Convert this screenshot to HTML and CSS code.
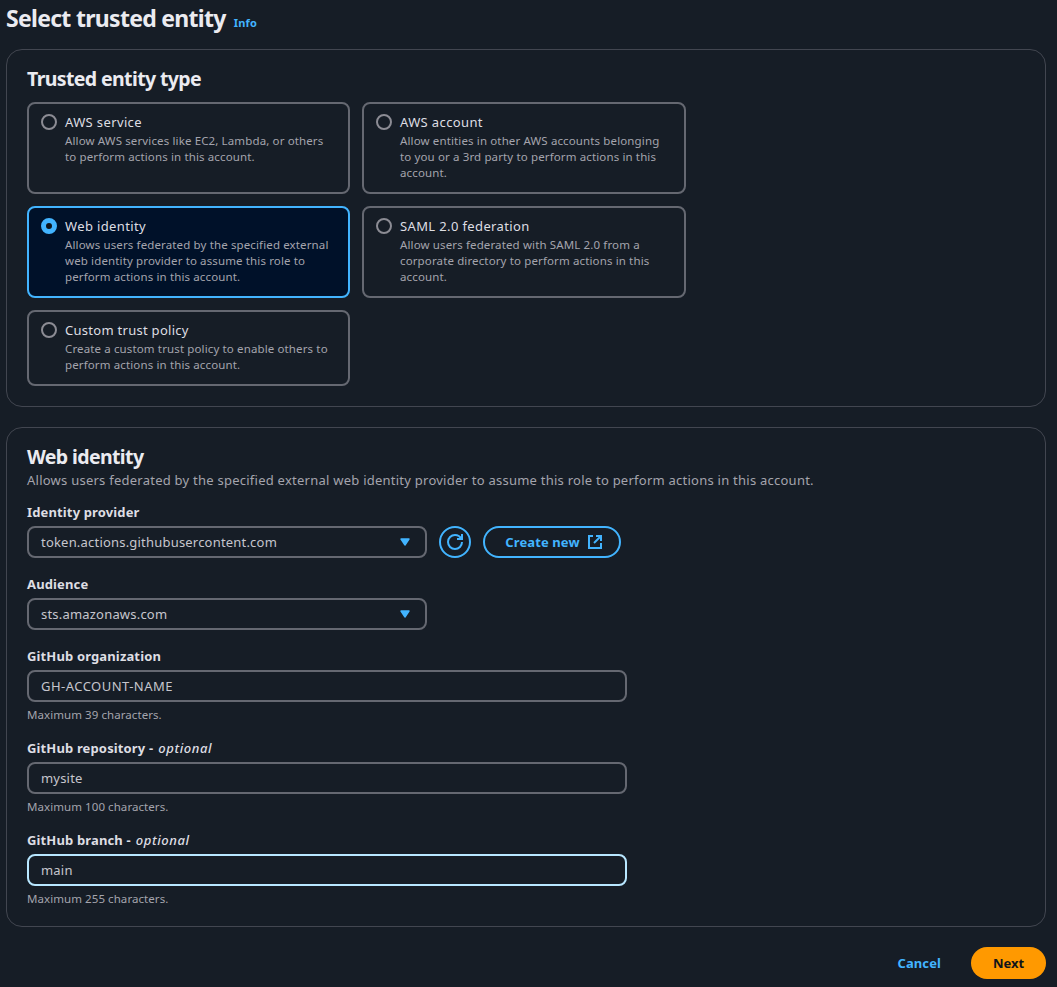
FILE: index.html
```html
<!DOCTYPE html>
<html lang="en">
<head>
<meta charset="utf-8">
<title>Select trusted entity</title>
<link rel="stylesheet" href="styles.css">
</head>
<body>
<main class="page">
  <header class="page-header">
    <h1 class="page-title">Select trusted entity</h1>
    <a class="info">Info</a>
  </header>

  <section class="panel">
    <h2 class="panel-title">Trusted entity type</h2>
    <div class="tiles">
      <div class="tile">
        <span class="radio"></span>
        <div>
          <div class="tile-label">AWS service</div>
          <div class="tile-desc">Allow AWS services like EC2, Lambda, or others<br>to perform actions in this account.</div>
        </div>
      </div>
      <div class="tile">
        <span class="radio"></span>
        <div>
          <div class="tile-label">AWS account</div>
          <div class="tile-desc">Allow entities in other AWS accounts belonging<br>to you or a 3rd party to perform actions in this<br>account.</div>
        </div>
      </div>
      <div class="tile tile-selected">
        <span class="radio"></span>
        <div>
          <div class="tile-label">Web identity</div>
          <div class="tile-desc">Allows users federated by the specified external<br>web identity provider to assume this role to<br>perform actions in this account.</div>
        </div>
      </div>
      <div class="tile">
        <span class="radio"></span>
        <div>
          <div class="tile-label">SAML 2.0 federation</div>
          <div class="tile-desc">Allow users federated with SAML 2.0 from a<br>corporate directory to perform actions in this<br>account.</div>
        </div>
      </div>
      <div class="tile">
        <span class="radio"></span>
        <div>
          <div class="tile-label tile-label-long">Custom trust policy</div>
          <div class="tile-desc">Create a custom trust policy to enable others to<br>perform actions in this account.</div>
        </div>
      </div>
    </div>
  </section>

  <section class="panel">
    <h2 class="panel-title panel-title-tight">Web identity</h2>
    <p class="panel-desc">Allows users federated by the specified external web identity provider to assume this role to perform actions in this account.</p>
    <div class="fields">
      <div class="field">
        <div class="label">Identity provider</div>
        <div class="control-row">
          <div class="control select">
            <span>token.actions.githubusercontent.com</span>
            <svg class="caret" width="16" height="16" viewBox="0 0 16 16"><path d="M4 5h8l-4 6z"/></svg>
          </div>
          <button class="btn btn-icon" aria-label="Refresh">
            <svg class="icon" width="16" height="16" viewBox="0 0 16 16"><path d="M15 8c0 3.87-3.13 7-7 7s-7-3.13-7-7 3.13-7 7-7c2.79 0 5.2 1.63 6.33 4"/><path d="M10 5h5V0"/></svg>
          </button>
          <button class="btn btn-create">
            <span>Create new</span>
            <svg class="icon" width="16" height="16" viewBox="0 0 16 16"><path d="M9 2h5v5"/><path d="m7 9 7-7"/><path d="M14 9.05V14H2V2h4"/></svg>
          </button>
        </div>
      </div>
      <div class="field">
        <div class="label">Audience</div>
        <div class="control select">
          <span>sts.amazonaws.com</span>
          <svg class="caret" width="16" height="16" viewBox="0 0 16 16"><path d="M4 5h8l-4 6z"/></svg>
        </div>
      </div>
      <div class="field">
        <div class="label">GitHub organization</div>
        <div class="control control-caps">GH-ACCOUNT-NAME</div>
        <div class="hint">Maximum 39 characters.</div>
      </div>
      <div class="field">
        <div class="label">GitHub repository - <em class="optional">optional</em></div>
        <div class="control">mysite</div>
        <div class="hint">Maximum 100 characters.</div>
      </div>
      <div class="field">
        <div class="label">GitHub branch - <em class="optional">optional</em></div>
        <div class="control control-focused">main</div>
        <div class="hint">Maximum 255 characters.</div>
      </div>
    </div>
  </section>

  <footer class="actions">
    <button class="link-btn">Cancel</button>
    <button class="next-btn">Next</button>
  </footer>
</main>
</body>
</html>
```
FILE: styles.css
```css
* { box-sizing: border-box; }
body {
  margin: 0;
  background: #161d26;
  color: #dedee3;
  font-family: "Noto Sans", "Open Sans", sans-serif;
  font-size: 13px;
  line-height: 20px;
}
h1, h2, p { margin: 0; }
button { font: inherit; margin: 0; cursor: pointer; }
.page { padding: 0 11px 8px 6px; }
.page-header {
  display: flex;
  align-items: baseline;
  gap: 8px;
  height: 49px;
  padding-top: 3px;
}
.page-title {
  font-size: 23px;
  line-height: 30px;
  font-weight: 700;
  letter-spacing: -0.7px;
  color: #ebebf0;
}
.info { color: #42b4ff; font-size: 11px; font-weight: 700; letter-spacing: 0.2px; }
.panel {
  border: 1px solid #424650;
  border-radius: 16px;
  padding: 17px 20px 20px;
  margin-bottom: 20px;
}
.panel-title {
  font-size: 19.5px;
  line-height: 24px;
  font-weight: 700;
  letter-spacing: -0.62px;
  color: #ebebf0;
  margin-bottom: 11px;
}
.panel-title-tight { margin-bottom: 1px; }
.panel-desc { color: #a4a4ad; letter-spacing: 0.245px; }
.tiles {
  display: grid;
  grid-template-columns: 323px 324px;
  gap: 12px;
}
.tile {
  display: flex;
  gap: 8px;
  border: 2px solid #656871;
  border-radius: 8px;
  padding: 8px 12px 11px;
}
.tile-selected { border-color: #42b4ff; background: #001129; }
.radio {
  flex: none;
  width: 16px;
  height: 16px;
  margin-top: 2px;
  border: 2px solid #8c8c94;
  border-radius: 50%;
}
.tile-selected .radio { border: 5px solid #42b4ff; background: #0f141a; }
.tile-label { line-height: 20px; white-space: nowrap; letter-spacing: 0.37px; }
.tile-label-long { letter-spacing: 0.28px; }
.tile-desc {
  color: #a4a4ad;
  font-size: 11.5px;
  line-height: 16px;
  padding-top: 1px;
  white-space: nowrap;
  letter-spacing: 0.13px;
}
.fields { display: grid; gap: 16px; margin-top: 12px; }
.label { font-weight: 700; line-height: 20px; margin-bottom: 4px; letter-spacing: 0.14px; }
.optional { font-weight: 500; letter-spacing: 0.6px; margin-left: 1.5px; }
.control-row { display: flex; gap: 12px; }
.control {
  width: 600px;
  height: 32px;
  border: 2px solid #656871;
  border-radius: 8px;
  padding: 4px 12px;
  color: #c6c6cd;
  letter-spacing: 0.2px;
}
.control-caps { letter-spacing: 0.47px; }
.control-focused { border-color: #b8e7ff; }
.select {
  display: flex;
  align-items: center;
  justify-content: space-between;
  width: 400px;
}
.caret { fill: #42b4ff; stroke: #42b4ff; stroke-width: 1.4; stroke-linejoin: round; }
.hint {
  color: #a4a4ad;
  font-size: 11.5px;
  line-height: 16px;
  margin-top: 5px;
  height: 15px;
  letter-spacing: 0.07px;
}
.btn {
  display: flex;
  align-items: center;
  justify-content: center;
  height: 32px;
  border: 2px solid #42b4ff;
  border-radius: 16px;
  background: none;
  color: #42b4ff;
  font-weight: 700;
  padding: 0;
}
.btn-icon { width: 32px; }
.btn-create { width: 138px; gap: 7px; padding-left: 4px; letter-spacing: 0.1px; }
.icon { fill: none; stroke: #42b4ff; stroke-width: 2; }
.actions { display: flex; justify-content: flex-end; gap: 8px; }
.link-btn, .next-btn {
  height: 32px;
  border: 0;
  border-radius: 16px;
  font-weight: 700;
  padding: 0 22px;
}
.link-btn { background: none; color: #42b4ff; letter-spacing: 0.1px; }
.next-btn { width: 75px; background: #ff9900; color: #0f141a; }
```
